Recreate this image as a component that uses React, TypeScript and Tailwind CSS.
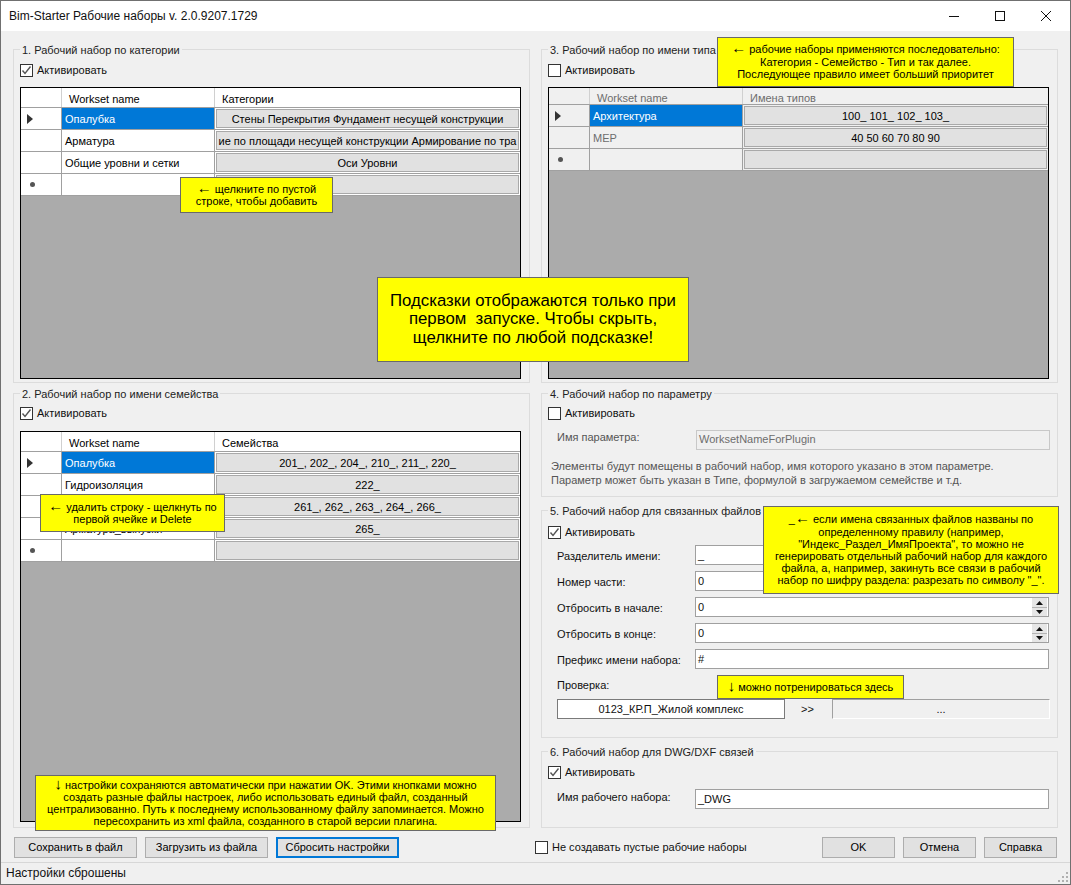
import React from "react";

const sans = "font-['Liberation_Sans',Arial,sans-serif]";

const Check = ({ checked, label, className = "" }: { checked?: boolean; label: string; className?: string }) => (
  <div className={`flex items-center h-[13px] ${className}`}>
    <div className="w-[13px] h-[13px] border border-[#333333] bg-white flex items-center justify-center shrink-0">
      {checked && (
        <svg width="11" height="11" viewBox="0 0 11 11" fill="none">
          <path d="M1.5 5.5 L4 8.5 L9.5 1.5" stroke="#555555" strokeWidth="1.4" />
        </svg>
      )}
    </div>
    <span className="ml-[4px] text-[11px] leading-[13px] whitespace-nowrap">{label}</span>
  </div>
);

const Group = ({ title, className = "", children }: { title: string; className?: string; children: React.ReactNode }) => (
  <div className={`relative border border-[#dcdcdc] ${className}`}>
    <span className="absolute left-[6px] -top-[7px] bg-[#f0f0f0] px-[2px] text-[11px] leading-[14px] text-[#222222] whitespace-nowrap">
      {title}
    </span>
    {children}
  </div>
);

interface Row {
  name: string;
  value: string;
}

const Grid = ({
  columns,
  rows,
  disabled,
  className = "",
}: {
  columns: [string, string];
  rows: Row[];
  disabled?: boolean;
  className?: string;
}) => {
  const cell = disabled ? "bg-[#f0f0f0]" : "bg-white";
  const text = disabled ? "text-[#6d6d6d]" : "text-black";
  return (
    <div className={`flex flex-col flex-1 border border-black bg-[#ababab] min-h-0 ${className}`}>
      <div className={`flex shrink-0 ${disabled ? "h-[17px] bg-[#f0f0f0] leading-[20px]" : "h-[20px] bg-white leading-[22px]"} text-[11px] border-b border-[#a0a0a0] ${text}`}>
        <div className="w-[41px] border-r border-[#d0d0d0]" />
        <div className="w-[153px] pl-[7px] border-r border-[#d0d0d0]">{columns[0]}</div>
        <div className="flex-1 pl-[7px]">{columns[1]}</div>
      </div>
      {rows.map((row, i) => {
        const isNew = i === rows.length - 1;
        const selected = i === 0;
        return (
          <div key={i} className="flex h-[22px] shrink-0">
            <div className={`w-[41px] flex items-center pl-[6px] border-r border-b border-[#a0a0a0] ${cell}`}>
              {selected && (
                <svg width="6" height="10" viewBox="0 0 6 10">
                  <path d="M0 0 L6 5 L0 10 Z" fill="#333333" />
                </svg>
              )}
              {isNew && <div className="w-[5px] h-[5px] rounded-full bg-[#555555] ml-[3px]" />}
            </div>
            <div
              className={`w-[153px] pl-[3px] border-r border-b border-[#a0a0a0] text-[11px] leading-[23px] whitespace-nowrap overflow-hidden ${
                selected ? "bg-[#0078d7] text-white" : `${cell} ${text}`
              }`}
            >
              {row.name}
            </div>
            <div className={`flex-1 min-w-0 p-[1px] border-b border-[#a0a0a0] ${cell}`}>
              <div className="h-full flex items-center justify-center border border-[#a9a9a9] bg-[#e1e1e1] text-[11px] leading-[20px] pt-[1px] text-black whitespace-nowrap overflow-hidden">
                {row.value}
              </div>
            </div>
          </div>
        );
      })}
    </div>
  );
};

const Spin = () => (
  <div className="ml-auto mr-[1px] w-[15px] h-[18px] flex flex-col gap-[1px] shrink-0 bg-[#b4b4b4]">
    {["M0 4 L3.5 0 L7 4 Z", "M0 0 L3.5 4 L7 0 Z"].map((d) => (
      <div key={d} className="flex-1 bg-[#e6e6e6] flex items-center justify-center">
        <svg width="7" height="4" viewBox="0 0 7 4">
          <path d={d} fill="#111111" />
        </svg>
      </div>
    ))}
  </div>
);

const Field = ({ label, value, spin, labelClass = "pt-[1px]" }: { label: string; value: string; spin?: boolean; labelClass?: string }) => (
  <div className="flex items-center h-[20px]">
    <span className={`w-[138px] text-[11px] whitespace-nowrap ${labelClass}`}>{label}</span>
    <div className="w-[354px] h-[20px] border border-[#a0a0a0] bg-white flex items-center pl-[2px] text-[11px] leading-[16px]">
      {value}
      {spin && <Spin />}
    </div>
  </div>
);

const Button = ({ label, width, focused }: { label: string; width: string; focused?: boolean }) => (
  <div
    className={`${width} h-[21px] flex items-center justify-center bg-[#e1e1e1] text-[11px] text-black ${
      focused ? "border-2 border-[#0078d7]" : "border border-[#adadad]"
    }`}
  >
    {label}
  </div>
);

// arrows are drawn much wider in the original font, so they get their own size
const Hint = ({ lines, className }: { lines: string[]; className: string }) => (
  <div className={`absolute flex flex-col items-center justify-center bg-[#ffff00] border border-[#696969] text-black text-center whitespace-pre ${className}`}>
    {lines.map((line) => (
      <div key={line}>
        {line.split(/([←↓])/).map((part, i) =>
          part === "←" || part === "↓" ? (
            <span key={i} className="text-[15px] leading-[10px]">
              {part}
            </span>
          ) : (
            part
          ),
        )}
      </div>
    ))}
  </div>
);

export default function App() {
  return (
    <div className={`relative w-[1071px] h-[885px] flex flex-col overflow-hidden bg-[#f0f0f0] border border-[#707070] text-[#111111] ${sans}`}>
      <div className="flex items-center h-[30px] shrink-0 bg-white pl-[8px]">
        <span className="text-[12px] text-[#111111]">Bim-Starter Рабочие наборы v. 2.0.9207.1729</span>
        <div className="ml-auto flex items-center">
          <div className="w-[46px] flex justify-center">
            <svg width="10" height="10" viewBox="0 0 10 10">
              <path d="M0 5.5 H10" stroke="#111111" />
            </svg>
          </div>
          <div className="w-[46px] flex justify-center">
            <svg width="10" height="10" viewBox="0 0 10 10" fill="none">
              <rect x="0.5" y="0.5" width="9" height="9" stroke="#111111" />
            </svg>
          </div>
          <div className="w-[46px] flex justify-center mr-[1px]">
            <svg width="10" height="10" viewBox="0 0 10 10" fill="none">
              <path d="M0 0 L10 10 M10 0 L0 10" stroke="#111111" />
            </svg>
          </div>
        </div>
      </div>

      <div className="flex gap-[11px] pl-[12px] pt-[18px] h-[797px] shrink-0">
        <div className="w-[517px] flex flex-col gap-[10px]">
          <Group title="1. Рабочий набор по категории" className="h-[334px] flex flex-col pl-[6px] pr-[8px] pt-[14px] pb-[3px]">
            <Check checked label="Активировать" />
            <Grid
              className="mt-[10px]"
              columns={["Workset name", "Категории"]}
              rows={[
                { name: "Опалубка", value: "Стены Перекрытия Фундамент несущей конструкции" },
                { name: "Арматура", value: "ие по площади несущей конструкции Армирование по тра" },
                { name: "Общие уровни и сетки", value: "Оси Уровни" },
                { name: "", value: "" },
              ]}
            />
          </Group>
          <Group title="2. Рабочий набор по имени семейства" className="h-[435px] flex flex-col pl-[6px] pr-[8px] pt-[13px] pb-[5px]">
            <Check checked label="Активировать" />
            <Grid
              className="mt-[11px]"
              columns={["Workset name", "Семейства"]}
              rows={[
                { name: "Опалубка", value: "201_, 202_, 204_, 210_, 211_, 220_" },
                { name: "Гидроизоляция", value: "222_" },
                { name: "", value: "261_, 262_, 263_, 264_, 266_" },
                { name: "Арматура_выпуски", value: "265_" },
                { name: "", value: "" },
              ]}
            />
          </Group>
        </div>

        <div className="w-[517px] flex flex-col">
          <Group title="3. Рабочий набор по имени типа" className="h-[334px] flex flex-col pl-[6px] pr-[8px] pt-[14px] pb-[3px]">
            <Check label="Активировать" />
            <Grid
              disabled
              className="mt-[10px]"
              columns={["Workset name", "Имена типов"]}
              rows={[
                { name: "Архитектура", value: "100_ 101_ 102_ 103_" },
                { name: "MEP", value: "40 50 60 70 80 90" },
                { name: "", value: "" },
              ]}
            />
          </Group>
          <Group title="4. Рабочий набор по параметру" className="mt-[10px] h-[105px] pl-[6px] pt-[13px]">
            <Check label="Активировать" />
            <div className="flex items-center h-[20px] mt-[10px] pl-[9px]">
              <span className="w-[139px] text-[11px] text-[#555555] -mt-[4px]">Имя параметра:</span>
              <div className="w-[354px] h-[20px] border border-[#c8c8c8] bg-[#f0f0f0] flex items-center pl-[2px] text-[11px] text-[#6d6d6d]">
                WorksetNameForPlugin
              </div>
            </div>
            <div className="mt-[9px] ml-[3px] text-[11px] leading-[14px] text-[#555555] whitespace-nowrap">
              <div>Элементы будут помещены в рабочий набор, имя которого указано в этом параметре.</div>
              <div>Параметр может быть указан в Типе, формулой в загружаемом семействе и т.д.</div>
            </div>
          </Group>
          <Group title="5. Рабочий набор для связанных файлов" className="mt-[13px] h-[228px] pl-[6px] pt-[15px]">
            <Check checked label="Активировать" />
            <div className="flex flex-col gap-[6px] mt-[6px] pl-[9px]">
              <Field label="Разделитель имени:" value="_" />
              <Field label="Номер части:" value="0" spin />
              <Field label="Отбросить в начале:" value="0" spin />
              <Field label="Отбросить в конце:" value="0" spin />
              <Field label="Префикс имени набора:" value="#" />
            </div>
            <div className="mt-[9px] pl-[9px] text-[11px] leading-[14px]">Проверка:</div>
            <div className="flex items-center mt-[7px] pl-[9px]">
              <div className="w-[228px] h-[20px] border border-[#7a7a7a] bg-white flex items-center justify-center text-[11px]">
                0123_КР.П_Жилой комплекс
              </div>
              <span className="w-[47px] pl-[16px] text-[11px]">&gt;&gt;</span>
              <div className="w-[218px] h-[20px] border-t border-l border-[#a0a0a0] border-r border-b border-r-white border-b-white flex items-center justify-center text-[11px]">
                ...
              </div>
            </div>
          </Group>
          <Group title="6. Рабочий набор для DWG/DXF связей" className="mt-[13px] h-[77px] pl-[6px] pt-[14px]">
            <Check checked label="Активировать" />
            <div className="mt-[10px] pl-[9px]">
              <Field label="Имя рабочего набора:" value="_DWG" labelClass="-mt-[4px]" />
            </div>
          </Group>
        </div>
      </div>

      <div className="flex items-center h-[21px] mt-[9px] pl-[13px] pr-[13px] shrink-0">
        <div className="flex gap-[8px]">
          <Button width="w-[123px]" label="Сохранить в файл" />
          <Button width="w-[123px]" label="Загрузить из файла" />
          <Button width="w-[123px]" label="Сбросить настройки" focused />
        </div>
        <Check label="Не создавать пустые рабочие наборы" className="ml-[136px]" />
        <div className="ml-auto flex gap-[8px]">
          <Button width="w-[73px]" label="OK" />
          <Button width="w-[73px]" label="Отмена" />
          <Button width="w-[73px]" label="Справка" />
        </div>
      </div>

      <div className="relative flex-1 mt-[4px] border-t border-[#d7d7d7] pl-[5px] text-[12px] leading-[20px]">
        Настройки сброшены
        <svg className="absolute right-[1px] bottom-[1px]" width="12" height="12" viewBox="0 0 12 12" fill="#b0b0b0">
          <rect x="9" y="1" width="2" height="2" />
          <rect x="5" y="5" width="2" height="2" />
          <rect x="9" y="5" width="2" height="2" />
          <rect x="1" y="9" width="2" height="2" />
          <rect x="5" y="9" width="2" height="2" />
          <rect x="9" y="9" width="2" height="2" />
        </svg>
      </div>

      <Hint className="left-[179px] top-[176px] w-[153px] h-[36px] text-[11px] leading-[12px]" lines={["← щелкните по пустой", "строке, чтобы добавить"]} />
      <Hint
        className="left-[716px] top-[36px] w-[297px] h-[50px] text-[11px] leading-[12.5px]"
        lines={["← рабочие наборы применяются последовательно:", "Категория - Семейство - Тип и так далее.", "Последующее правило имеет больший приоритет"]}
      />
      <Hint
        className="left-[376px] top-[276px] w-[312px] h-[85px] text-[16.8px] leading-[18.5px] font-light"
        lines={["Подсказки отображаются только при", "первом  запуске. Чтобы скрыть,", "щелкните по любой подсказке!"]}
      />
      <Hint className="left-[39px] top-[493px] w-[185px] h-[38px] text-[11px] leading-[12px]" lines={["← удалить строку - щелкнуть по", "первой ячейке и Delete"]} />
      <Hint
        className="left-[762px] top-[505px] w-[296px] h-[88px] text-[11px] leading-[12.2px]"
        lines={[
          "_← если имена связанных файлов названы по",
          "определенному правилу (например,",
          "\"Индекс_Раздел_ИмяПроекта\", то можно не",
          "генерировать отдельный рабочий набор для каждого",
          "файла, а, например, закинуть все связи в рабочий",
          "набор по шифру раздела: разрезать по символу \"_\".",
        ]}
      />
      <Hint className="left-[716px] top-[674px] w-[187px] h-[24px] text-[11px] leading-[12px]" lines={["↓ можно потренироваться здесь"]} />
      <Hint
        className="left-[34px] top-[774px] w-[461px] h-[56px] text-[11px] leading-[12.2px]"
        lines={[
          "↓ настройки сохраняются автоматически при нажатии OK. Этими кнопками можно",
          "создать разные файлы настроек, либо использовать единый файл, созданный",
          "централизованно. Путь к последнему использованному файлу запоминается. Можно",
          "пересохранить из xml файла, созданного в старой версии плагина.",
        ]}
      />
    </div>
  );
}
